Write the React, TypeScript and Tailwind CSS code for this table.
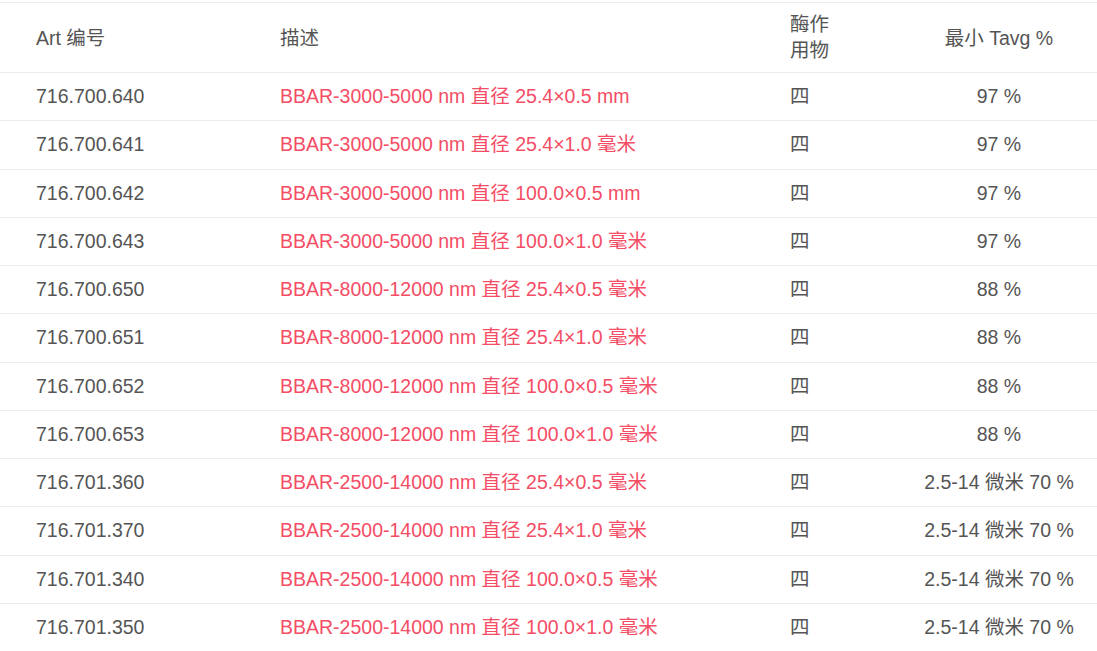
const rows = [
  { art: "716.700.640", desc: "BBAR-3000-5000 nm 直径 25.4×0.5 mm", min: "97 %" },
  { art: "716.700.641", desc: "BBAR-3000-5000 nm 直径 25.4×1.0 毫米", min: "97 %" },
  { art: "716.700.642", desc: "BBAR-3000-5000 nm 直径 100.0×0.5 mm", min: "97 %" },
  { art: "716.700.643", desc: "BBAR-3000-5000 nm 直径 100.0×1.0 毫米", min: "97 %" },
  { art: "716.700.650", desc: "BBAR-8000-12000 nm 直径 25.4×0.5 毫米", min: "88 %" },
  { art: "716.700.651", desc: "BBAR-8000-12000 nm 直径 25.4×1.0 毫米", min: "88 %" },
  { art: "716.700.652", desc: "BBAR-8000-12000 nm 直径 100.0×0.5 毫米", min: "88 %" },
  { art: "716.700.653", desc: "BBAR-8000-12000 nm 直径 100.0×1.0 毫米", min: "88 %" },
  { art: "716.701.360", desc: "BBAR-2500-14000 nm 直径 25.4×0.5 毫米", min: "2.5-14 微米 70 %" },
  { art: "716.701.370", desc: "BBAR-2500-14000 nm 直径 25.4×1.0 毫米", min: "2.5-14 微米 70 %" },
  { art: "716.701.340", desc: "BBAR-2500-14000 nm 直径 100.0×0.5 毫米", min: "2.5-14 微米 70 %" },
  { art: "716.701.350", desc: "BBAR-2500-14000 nm 直径 100.0×1.0 毫米", min: "2.5-14 微米 70 %" },
];

const cols = "grid grid-cols-[280px_510px_111px_196px]";

export default function App() {
  return (
    <div
      className="w-[1097px] h-[651px] overflow-hidden bg-white text-[19.5px] text-[#555555]"
      style={{ fontFamily: '"Liberation Sans", Arial, "Noto Sans CJK SC", sans-serif' }}
    >
      <div className={`${cols} mt-[2px] h-[71px] border-y border-[#ebebeb] items-center`}>
        <div className="pl-[36px] leading-[24px]">Art 编号</div>
        <div className="leading-[24px]">描述</div>
        <div className="w-[50px] leading-[26px] pb-[2px]">酶作用物</div>
        <div className="text-center leading-[24px]">最小 Tavg %</div>
      </div>
      {rows.map((r) => (
        <div
          key={r.art}
          className={`${cols} h-[48.25px] border-b border-[#ebebeb] items-center pb-[1px] leading-[24px]`}
        >
          <div className="pl-[36px]">{r.art}</div>
          <div className="text-[#f44d65]">{r.desc}</div>
          <div>四</div>
          <div className="text-center">{r.min}</div>
        </div>
      ))}
    </div>
  );
}
